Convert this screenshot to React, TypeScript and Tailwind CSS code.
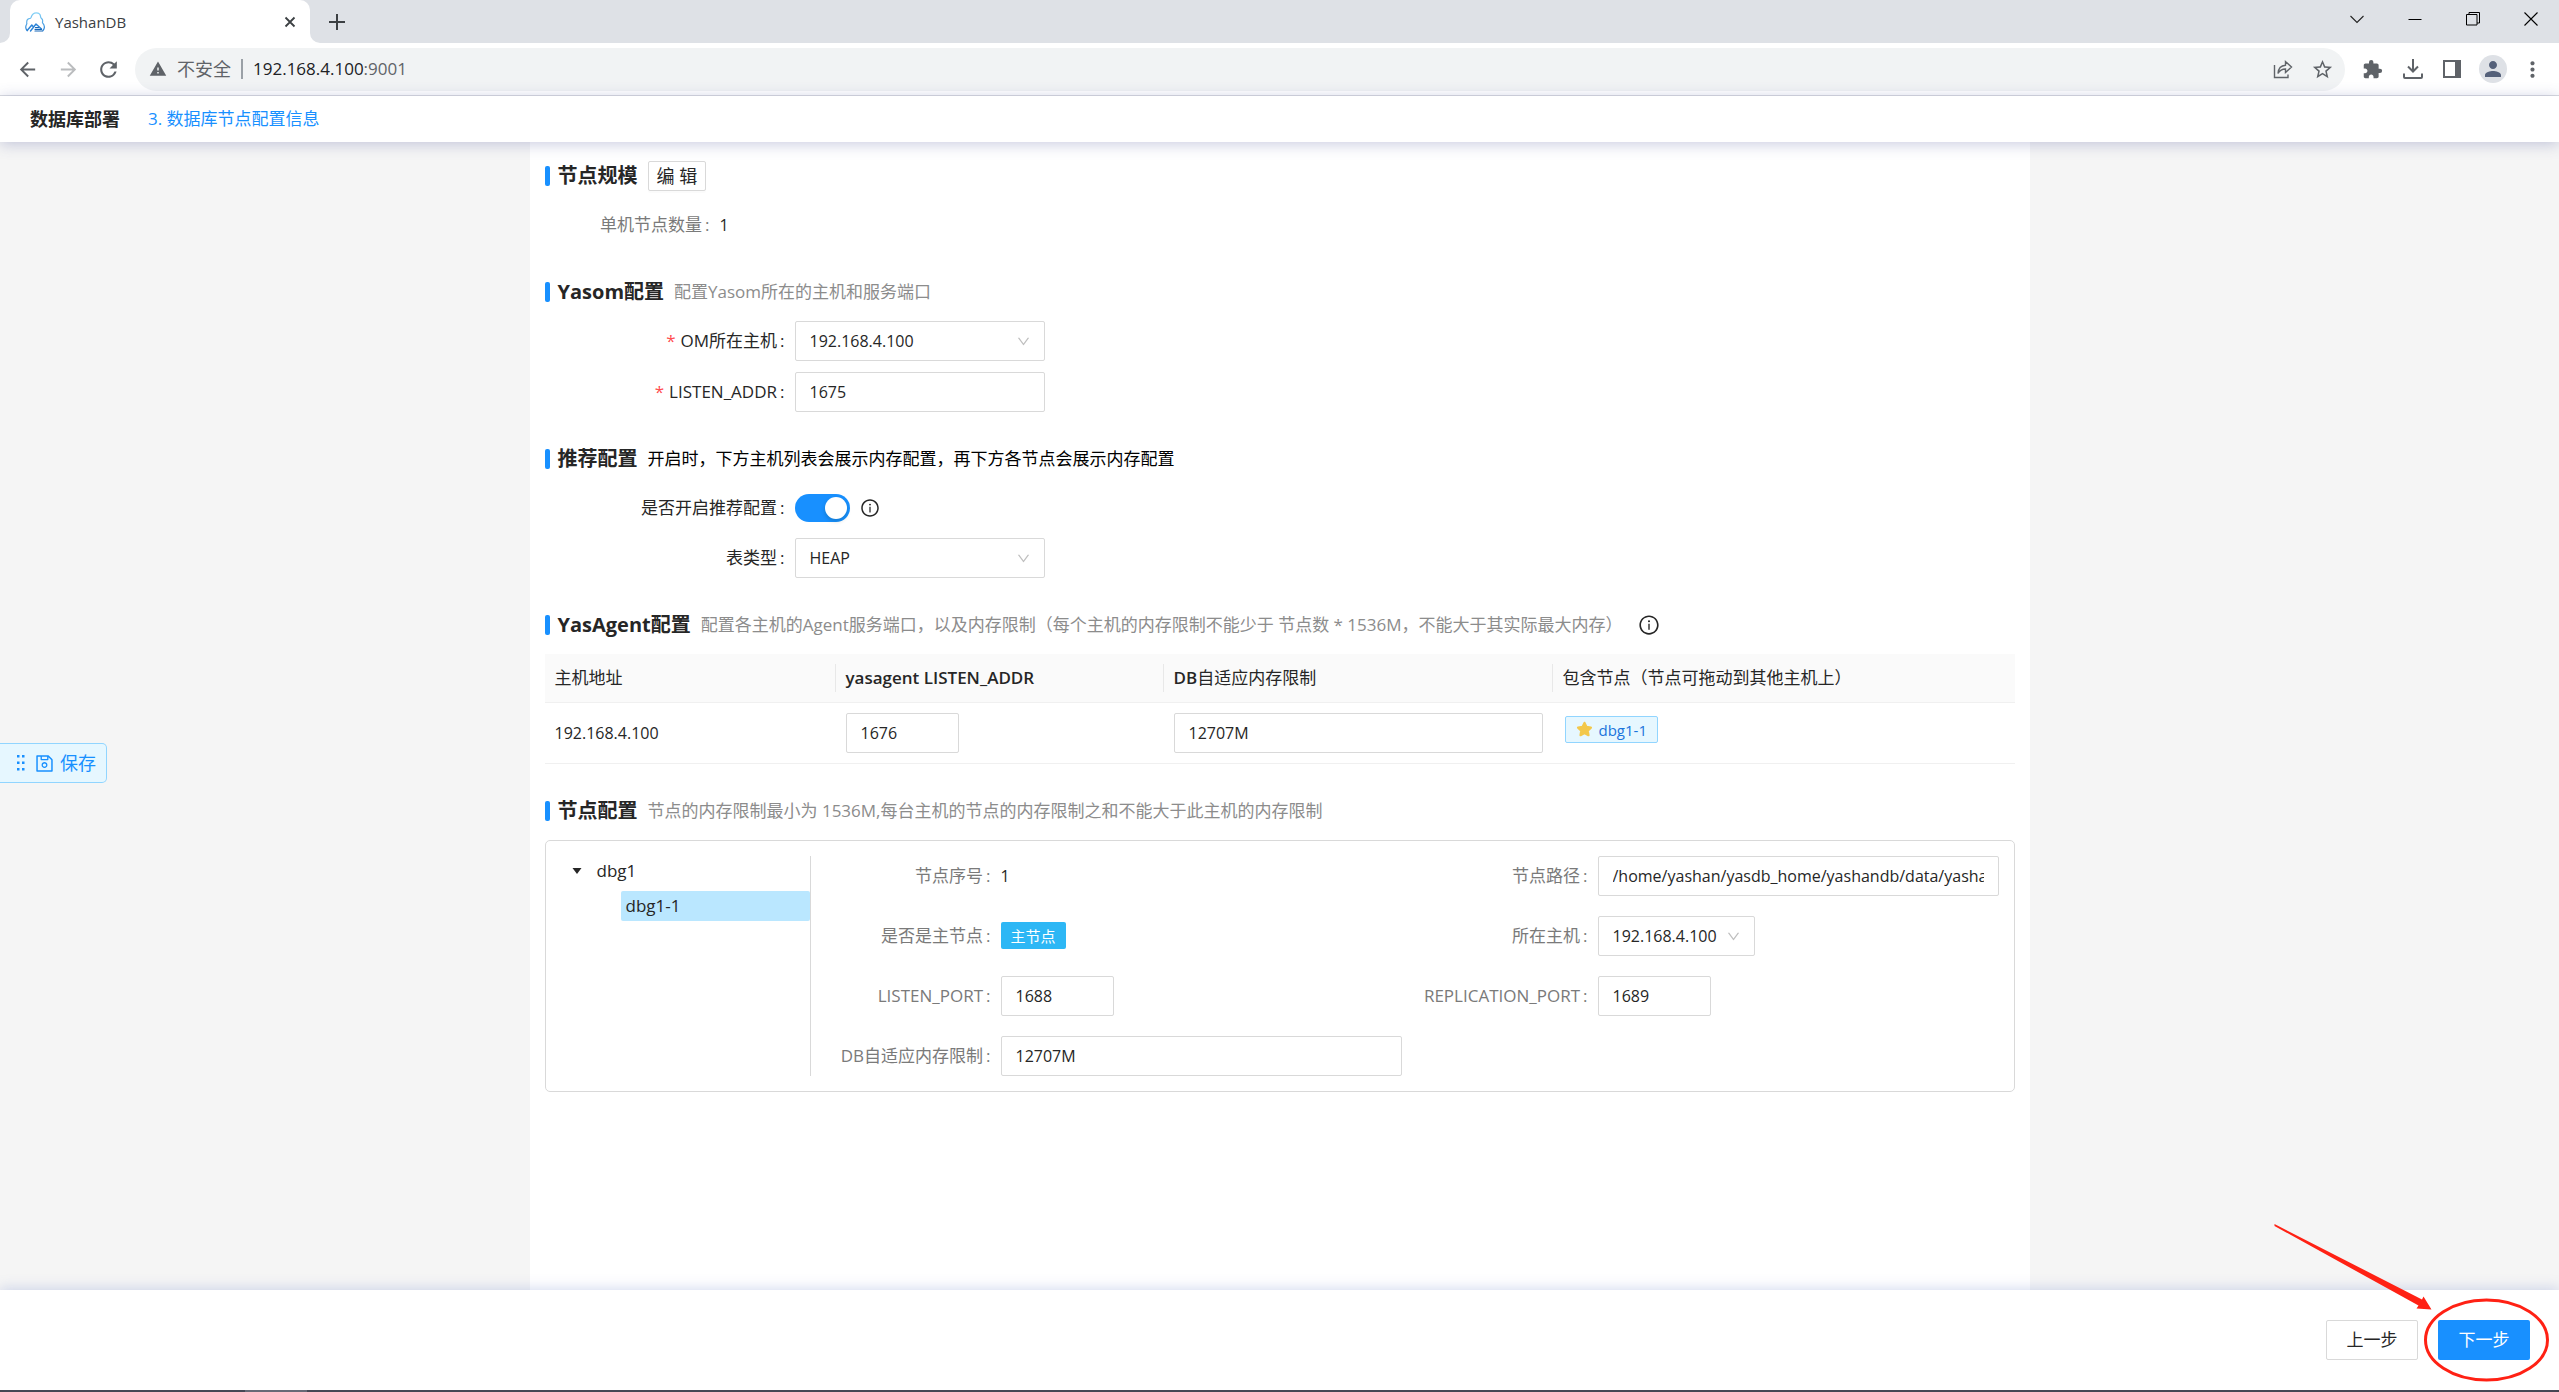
import { useState } from 'react'
import type { ReactNode } from 'react'
import { AiOutlineDown, AiOutlineInfoCircle, AiOutlineSave } from 'react-icons/ai'
import { MdArrowBack, MdArrowForward, MdExtension, MdMoreVert, MdPerson, MdRefresh, MdStarBorder, MdWarning } from 'react-icons/md'

const field = 'h-10 rounded-xs border border-[#d9d9d9] bg-white px-[14px] text-base text-[#262626] outline-none'
const muted = 'text-[17px] text-[#8c8c8c]'

function TabStrip() {
  return (
    <div className="flex h-[43px] items-center bg-[#dee1e6] pl-[10px] pr-[21px]">
      <div className="relative flex h-full w-[300px] items-center rounded-t-[10px] bg-white pl-[15px] pr-[10px]">
        <svg className="absolute bottom-0 -left-[10px]" width="10" height="10" viewBox="0 0 10 10" fill="#fff">
          <path d="M10 0v10H0A10 10 0 0 0 10 0z" />
        </svg>
        <svg className="absolute bottom-0 -right-[10px]" width="10" height="10" viewBox="0 0 10 10" fill="#fff">
          <path d="M0 0v10h10A10 10 0 0 1 0 0z" />
        </svg>
        <Logo />
        <span className="ml-[10px] flex-1 text-[15px] text-[#3c4043]">YashanDB</span>
        <button aria-label="关闭标签页" className="flex h-5 w-5 items-center justify-center text-[#3c4043]">
          <svg width="12" height="12" viewBox="0 0 12 12" stroke="currentColor" strokeWidth="1.8"><path d="M1.5 1.5l9 9M10.5 1.5l-9 9" /></svg>
        </button>
      </div>
      <button aria-label="新标签页" className="ml-[19px] text-[#3c4043]">
        <svg width="16" height="16" viewBox="0 0 16 16" stroke="currentColor" strokeWidth="2"><path d="M8 0v16M0 8h16" /></svg>
      </button>
      <div className="ml-auto flex items-center gap-11 pb-[6px]">
        <button aria-label="搜索标签页">
          <svg width="14" height="14" viewBox="0 0 14 14" fill="none" stroke="#222" strokeWidth="1.1"><path d="M.5 4L7 10.5 13.5 4" /></svg>
        </button>
        <button aria-label="最小化">
          <svg width="14" height="14" viewBox="0 0 14 14" stroke="#000" strokeWidth="1"><path d="M.5 7.5h13" /></svg>
        </button>
        <button aria-label="还原">
          <svg width="14" height="14" viewBox="0 0 14 14" fill="none" stroke="#000" strokeWidth="1"><path d="M.5 2.5h10.5v10.5H.5zM3 2.5V.5h10.5v10.5H11" /></svg>
        </button>
        <button aria-label="关闭">
          <svg width="14" height="14" viewBox="0 0 14 14" stroke="#000" strokeWidth="1.1"><path d="M.5.5l13 13M13.5.5l-13 13" /></svg>
        </button>
      </div>
    </div>
  )
}

function Logo() {
  return (
    <svg width="20" height="20" viewBox="0 0 20 20" fill="none" strokeLinecap="round" strokeLinejoin="round">
      <defs>
        <linearGradient id="logo-sky" x1="0" y1="0" x2="0" y2="1">
          <stop offset="0" stopColor="#86d3f7" />
          <stop offset="1" stopColor="#2b83d6" />
        </linearGradient>
      </defs>
      <path
        d="M2.2 18.500C.8 17 .4 14.500 1.500 12.500c.3-.6.4-1 .3-1.600-.3-2.400 1-4.200 3.200-4.500.6-.1.9-.5 1.100-1C7 2.500 9 .8 11.200.8c2.500 0 4.300 1.700 4.400 4 0 .6.200 1 .7 1.400 1.300 1 1.600 2.300 1.200 3.700-.1.500 0 .9.3 1.300 1.900 2.400 1.900 5.300.2 7.300"
        stroke="url(#logo-sky)"
        strokeWidth="1.2"
      />
      <path d="M2.200 18.500l4.600-5.500 1.300 1.500M5.500 19l5.500-7 5.500 5" stroke="#2b83d6" strokeWidth="1.4" />
      <path d="M10.500 15.500h3M10 17.300h6.500M10 19h7.500" stroke="#1767b8" strokeWidth="1.2" />
    </svg>
  )
}

function Toolbar() {
  return (
    <div className="flex h-[53px] items-center border-b border-[#dadce0] pl-4 pr-[14px] text-[#5f6368]">
      <button aria-label="后退"><MdArrowBack size={23} /></button>
      <button aria-label="前进" className="ml-[18px] text-[#babcbe]"><MdArrowForward size={23} /></button>
      <button aria-label="重新加载" className="ml-4"><MdRefresh size={25} /></button>
      <div className="ml-[14px] flex h-[43px] flex-1 items-center rounded-full bg-[#f1f3f4] pl-[14px] pr-[11px] text-[17px]">
        <MdWarning size={18} />
        <span className="ml-[10px] text-[18px]">不安全</span>
        <span className="mx-[10px] h-5 w-[2px] bg-[#9aa0a6]" />
        <span><span className="text-[#202124]">192.168.4.100</span>:9001</span>
        <button aria-label="分享此页" className="ml-auto">
          <svg width="20" height="20" viewBox="0 0 20 20" fill="none" stroke="currentColor" strokeWidth="1.4">
            <path d="M1.500 6v12.500H15v-3" />
            <path d="M5 14.500C5.300 9.500 7.800 6.500 12.500 6.200V2.500l6 5.600-6 5.400V10C9.200 10 6.800 11.300 5 14.500z" />
          </svg>
        </button>
        <button aria-label="收藏" className="ml-[18px]"><MdStarBorder size={23} /></button>
      </div>
      <button aria-label="扩展程序" className="ml-[17px]"><MdExtension size={21} /></button>
      <button aria-label="下载" className="ml-[20px]">
        <svg width="20" height="20" viewBox="0 0 20 20" fill="none" stroke="currentColor" strokeWidth="2">
          <path d="M10 0v12M5 7.500l5 5 5-5M1 14.500V18q0 1 1 1h16q1 0 1-1v-3.500" />
        </svg>
      </button>
      <button aria-label="侧边栏" className="ml-[20px]">
        <svg width="18" height="18" viewBox="0 0 18 18" fill="currentColor"><path d="M0 0h18v18H0zM2 2v14h10V2z" fillRule="evenodd" /></svg>
      </button>
      <button aria-label="用户" className="ml-[18px] flex h-7 w-7 items-center justify-center rounded-full bg-[#dee1e6] text-[#55617a]"><MdPerson size={24} /></button>
      <button aria-label="更多" className="ml-[13px]"><MdMoreVert size={25} /></button>
    </div>
  )
}

function Section({ title, extra, children }: { title: string; extra?: ReactNode; children: ReactNode }) {
  return (
    <section>
      <div className="mb-[14px] flex h-[30px] items-center">
        <span className="h-5 w-[5px] rounded-xs bg-[#1890ff]" />
        <h2 className="ml-2 mr-[10px] text-xl font-bold">{title}</h2>
        {extra}
      </div>
      {children}
    </section>
  )
}

function Label({ text, id, required }: { text: string; id?: string; required?: boolean }) {
  return (
    <label htmlFor={id} className="pr-[10px] text-right text-[17px] whitespace-nowrap">
      {required && <span className="mr-[5px] text-[#ff4d4f]">*</span>}
      {text}<span className="ml-[3px]">:</span>
    </label>
  )
}

function Row({ label, id, required, children }: { label: string; id?: string; required?: boolean; children: ReactNode }) {
  return (
    <div className="grid min-h-10 grid-cols-[250px_1fr] items-center">
      <Label text={label} id={id} required={required} />
      <div className="flex items-center">{children}</div>
    </div>
  )
}

function NodeItem({ label, id, children }: { label: string; id?: string; children: ReactNode }) {
  return (
    <div className="grid h-10 grid-cols-[190px_1fr] items-center">
      <div className="flex justify-end text-[#7a7a7a]"><Label text={label} id={id} /></div>
      <div className="flex items-center">{children}</div>
    </div>
  )
}

function Select({ id, value, compact }: { id: string; value: string; compact?: boolean }) {
  return (
    <div className={compact ? 'relative w-[157px]' : 'relative w-[250px]'}>
      <select id={id} defaultValue={value} className={`${field} w-full appearance-none`}>
        <option value={value}>{value}</option>
      </select>
      <AiOutlineDown size={15} className="pointer-events-none absolute right-[14px] top-[13px] text-[#bfbfbf]" />
    </div>
  )
}

function AgentTable() {
  const th = 'relative h-12 px-[10px] text-left text-[17px] font-normal'
  const sep = 'absolute right-0 top-[10px] h-7 w-px bg-[#e8e8e8]'
  return (
    <table className="w-full table-fixed border-collapse">
      <colgroup>
        <col className="w-[291px]" />
        <col className="w-[328px]" />
        <col className="w-[389px]" />
        <col />
      </colgroup>
      <thead className="bg-[#fafafa]">
        <tr className="border-b border-[#f0f0f0]">
          <th className={th}>主机地址<span className={sep} /></th>
          <th className={th}><span className="font-semibold">yasagent LISTEN_ADDR</span><span className={sep} /></th>
          <th className={th}><span className="font-semibold">DB</span>自适应内存限制<span className={sep} /></th>
          <th className={th}>包含节点（节点可拖动到其他主机上）</th>
        </tr>
      </thead>
      <tbody>
        <tr className="h-[61px] border-b border-[#f0f0f0]">
          <td className="px-[10px]">192.168.4.100</td>
          <td className="px-[10px]"><input aria-label="yasagent LISTEN_ADDR" defaultValue="1676" className={`${field} block w-[113px]`} /></td>
          <td className="px-[10px]"><input aria-label="DB自适应内存限制" defaultValue="12707M" className={`${field} block w-full`} /></td>
          <td className="px-3 pb-[6px]">
            <span className="flex h-[27px] w-fit items-center gap-[6px] rounded-xs border border-[#91d5ff] bg-[#e6f7ff] px-[10px] text-[15px] text-[#1b74dc]">
              <svg width="17" height="17" viewBox="0 0 18 18" fill="#f3c84b" stroke="#f3c84b" strokeWidth="2.400" strokeLinejoin="round">
                <path d="M9 2l2.100 4.300 4.700.7-3.400 3.300.8 4.700L9 12.800 4.800 15l.8-4.700L2.200 7l4.700-.7z" />
              </svg>
              dbg1-1
            </span>
          </td>
        </tr>
      </tbody>
    </table>
  )
}

function NodePanel() {
  return (
    <div className="flex rounded-[5px] border border-[#d9d9d9] p-[15px]">
      <ul className="w-[250px] border-r border-[#d9d9d9] pl-[10px] text-[17px]">
        <li>
          <button className="flex h-[30px] items-center">
            <svg width="10" height="6" viewBox="0 0 10 6" className="mr-[15px] ml-[1px]" fill="#262626"><path d="M.5 0h9L5 6z" /></svg>
            dbg1
          </button>
          <ul className="mt-[5px] pl-[50px]">
            <li><button className="flex h-[30px] w-full items-center rounded-xs bg-[#bae7ff] px-[5px]">dbg1-1</button></li>
          </ul>
        </li>
      </ul>
      <div className="grid flex-1 grid-cols-2 gap-x-[6px] gap-y-5">
        <NodeItem label="节点序号">1</NodeItem>
        <NodeItem label="节点路径" id="path">
          <input id="path" defaultValue="/home/yashan/yasdb_home/yashandb/data/yashandb" className={`${field} w-full`} />
        </NodeItem>
        <NodeItem label="是否是主节点">
          <span className="flex h-[27px] items-center rounded-xs bg-[#2db7f5] px-[10px] text-[15px] text-white">主节点</span>
        </NodeItem>
        <NodeItem label="所在主机" id="host"><Select id="host" value="192.168.4.100" compact /></NodeItem>
        <NodeItem label="LISTEN_PORT" id="listen-port"><input id="listen-port" defaultValue="1688" className={`${field} w-[113px]`} /></NodeItem>
        <NodeItem label="REPLICATION_PORT" id="repl-port"><input id="repl-port" defaultValue="1689" className={`${field} w-[113px]`} /></NodeItem>
        <NodeItem label="DB自适应内存限制" id="memory"><input id="memory" defaultValue="12707M" className={`${field} w-full`} /></NodeItem>
      </div>
    </div>
  )
}

export default function App() {
  const [recommend, setRecommend] = useState(true)

  return (
    <div className="relative flex min-h-screen flex-col bg-[#f5f5f5] font-['Open_Sans','Noto_Sans_CJK_SC',sans-serif] text-base leading-6 text-[#262626]">
      <div className="bg-white">
        <TabStrip />
        <Toolbar />
      </div>
      <header className="relative z-10 flex h-[46px] items-center gap-7 bg-white pl-[30px] text-[17px] shadow-[0_2px_14px_rgba(70,80,150,0.3)]">
        <h1 className="text-[18px] font-bold">数据库部署</h1>
        <a href="#step-3" className="text-[#1890ff]">3. 数据库节点配置信息</a>
      </header>

      <main className="mx-auto flex w-full max-w-[1500px] flex-1 flex-col gap-8 bg-white px-[15px] pt-[19px] pb-8">
        <Section
          title="节点规模"
          extra={<button className="h-[30px] rounded-xs border border-[#d9d9d9] bg-white px-2 text-[18px] shadow-[0_2px_0_rgba(0,0,0,0.015)]">编 辑</button>}
        >
          <div className="grid h-10 grid-cols-[175px_1fr] items-center">
            <span className="pr-[10px] text-right text-[17px] text-[#7a7a7a]">单机节点数量<span className="ml-[3px]">:</span></span>
            <span>1</span>
          </div>
        </Section>

        <Section title="Yasom配置" extra={<span className={muted}>配置Yasom所在的主机和服务端口</span>}>
          <div className="flex flex-col gap-[11px]">
            <Row label="OM所在主机" id="om-host" required><Select id="om-host" value="192.168.4.100" /></Row>
            <Row label="LISTEN_ADDR" id="listen-addr" required>
              <input id="listen-addr" defaultValue="1675" className={`${field} w-[250px]`} />
            </Row>
          </div>
        </Section>

        <Section title="推荐配置" extra={<span className="text-[17px] text-black">开启时，下方主机列表会展示内存配置，再下方各节点会展示内存配置</span>}>
          <div className="flex flex-col gap-[10px]">
            <Row label="是否开启推荐配置" id="recommend">
              <input
                id="recommend"
                type="checkbox"
                role="switch"
                checked={recommend}
                onChange={e => setRecommend(e.target.checked)}
                className="flex h-7 w-[55px] appearance-none items-center rounded-full bg-[#bfbfbf] px-[3px] before:h-[22px] before:w-[22px] before:rounded-full before:bg-white before:shadow-[0_2px_4px_rgba(0,35,11,0.2)] checked:justify-end checked:bg-[#1890ff]"
              />
              <AiOutlineInfoCircle size={20} className="ml-[10px]" />
            </Row>
            <Row label="表类型" id="table-type"><Select id="table-type" value="HEAP" /></Row>
          </div>
        </Section>

        <Section
          title="YasAgent配置"
          extra={
            <>
              <span className={muted}>配置各主机的Agent服务端口，以及内存限制（每个主机的内存限制不能少于 节点数 * 1536M，不能大于其实际最大内存）</span>
              <AiOutlineInfoCircle size={22} className="ml-[15px]" />
            </>
          }
        >
          <AgentTable />
        </Section>

        <Section title="节点配置" extra={<span className={muted}>节点的内存限制最小为 1536M,每台主机的节点的内存限制之和不能大于此主机的内存限制</span>}>
          <NodePanel />
        </Section>
      </main>

      <footer className="relative flex h-[100px] items-center justify-end gap-5 bg-white pr-[29px] text-[17px] shadow-[0_-2px_12px_rgba(90,120,200,0.25)]">
        <button className="h-10 w-[92px] rounded-xs border border-[#d9d9d9] bg-white">上一步</button>
        <button className="h-10 w-[92px] rounded-xs bg-[#1890ff] text-white">下一步</button>
        <svg className="pointer-events-none absolute right-0 bottom-0" width="300" height="180" viewBox="0 0 300 180">
          <path d="M15.500 14L163 89.500 164.500 86.500 172.500 99.500 157.500 98.500 159.500 95.500 15.500 16z" fill="#ff2114" />
          <ellipse cx="227.500" cy="130" rx="61" ry="40" fill="none" stroke="#ff2114" strokeWidth="3" />
        </svg>
      </footer>
      <div className="flex h-[2px] bg-[#44444c]">
        <span className="ml-[245px] w-[62px] bg-[#696970]" />
      </div>

      <button className="absolute top-[743px] left-0 flex h-10 items-center rounded-r-[5px] border border-l-0 border-[#91d5ff] bg-[#e6f7ff] pr-[10px] pl-4 text-[18px] text-[#1890ff]">
        <svg width="10" height="18" viewBox="0 0 10 18" fill="currentColor">
          <path d="M1 1h2.500v2.500H1zM6 1h2.500v2.500H6zM1 7.500h2.500V10H1zM6 7.500h2.500V10H6zM1 14h2.500v2.500H1zM6 14h2.500v2.500H6z" />
        </svg>
        <AiOutlineSave size={21} className="mr-[5px] ml-2" />
        保存
      </button>
    </div>
  )
}
